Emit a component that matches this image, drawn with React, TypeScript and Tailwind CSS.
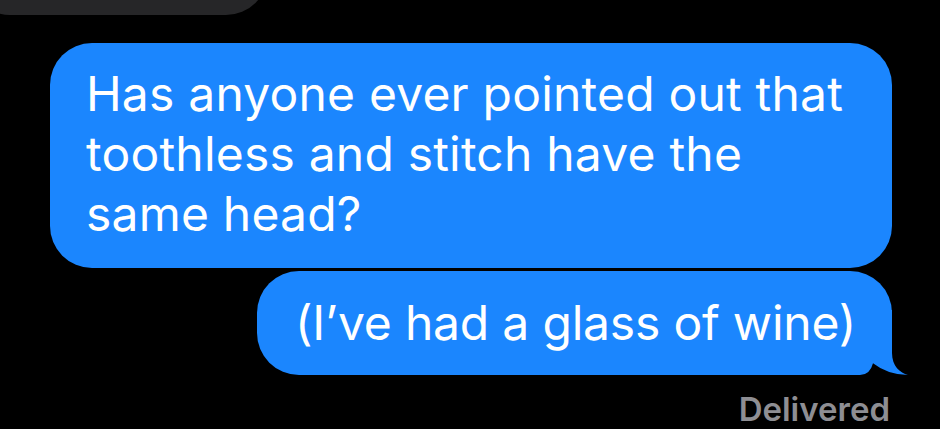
import React from "react";

export default function App() {
  return (
    <div className="w-[940px] h-[429px] bg-black overflow-hidden font-['Inter','Noto_Sans',sans-serif] flex flex-col">
      <div className="h-[100px] -mt-[85px] w-[300px] -ml-[32px] shrink-0 rounded-[42px] bg-[#262628]" />
      <div className="mt-[28px] ml-[50px] w-[842px] shrink-0 rounded-[42px] bg-[#1b86fe] pl-[36px] pr-[20px] pt-[21px] pb-[24px] text-white text-[48px] leading-[60px] tracking-[0.2px]">
        Has anyone ever pointed out that
        <br />
        toothless and stitch have the
        <br />
        same head?
      </div>
      <div className="relative mt-[3px] ml-auto mr-[48px] w-[635px] shrink-0 rounded-[42px] rounded-br-[60px] bg-[#1b86fe] pl-[38px] pt-[22px] pb-[22px] text-white text-[48px] leading-[60px] tracking-[-0.2px]">
        <svg
          className="absolute bottom-0 right-[-18px]"
          width="78"
          height="65"
          viewBox="0 0 78 65"
        >
          <path
            d="M0 0 H60 V43 C60 56 68 63 76 65 Q56 65 41 53.3 Q38 65 28 65 H0 Z"
            fill="#1b86fe"
          />
        </svg>
        <span className="relative">(I’ve had a glass of wine)</span>
      </div>
      <div className="mt-[14px] mr-[50px] text-right text-[33px] leading-[40px] font-semibold text-[#8e8e93]">
        Delivered
      </div>
    </div>
  );
}
